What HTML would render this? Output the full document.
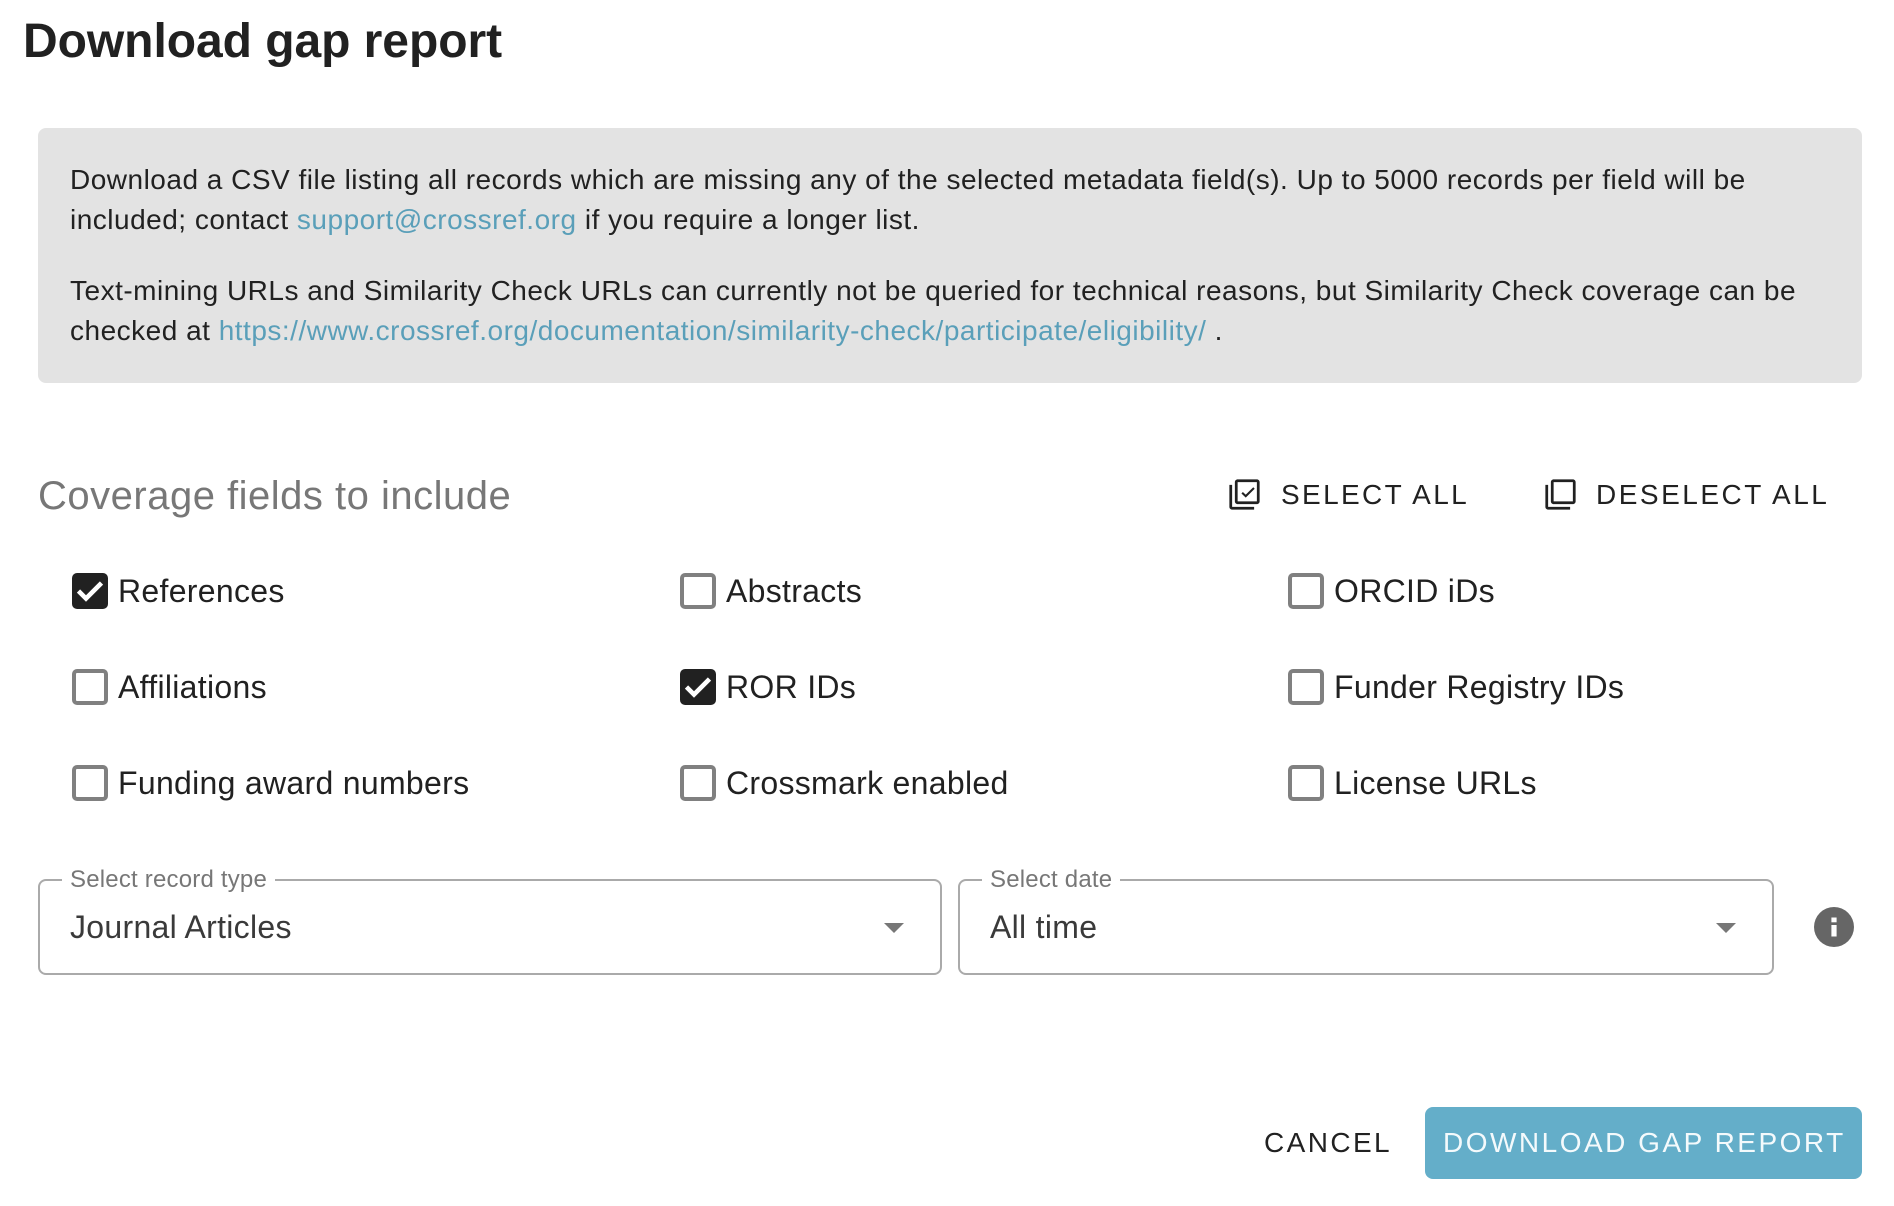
<!DOCTYPE html>
<html><head><meta charset="utf-8"><title>Download gap report</title>
<style>
html,body{margin:0;padding:0;background:#fff}
body{position:relative;width:1894px;height:1206px;overflow:hidden;font-family:"Liberation Sans",Arial,sans-serif;color:#212121}
.t{position:absolute;white-space:nowrap}
.info{font-size:28px;line-height:40px;left:70px;letter-spacing:.5px}
.info a{color:#5a9fb9;text-decoration:none}
.lab{font-size:32px;line-height:36px;letter-spacing:.3px}
.cb{position:absolute;width:36px;height:36px;box-sizing:border-box;border:4px solid #808080;border-radius:5px;background:#fff}
.cb.on{border:0;background:#212121}
.cb svg{position:absolute;left:0;top:0}
.btn{font-size:28px;line-height:32px;letter-spacing:2.4px}
.sel{position:absolute;top:879px;height:96px;box-sizing:border-box;border:2px solid #aaa;border-radius:8px;background:#fff}
.sl{font-size:24px;line-height:28px;color:#777;letter-spacing:.2px;background:#fff;padding:0 8px;top:866px}
.sv{font-size:32px;line-height:36px;color:#3a3a3a;top:909px;letter-spacing:.3px}
.ar{position:absolute;top:923px;width:0;height:0;border-left:10px solid transparent;border-right:10px solid transparent;border-top:10px solid #777}
</style></head><body>
<div class="t" style="left:23px;top:14px;font-size:48px;line-height:56px;font-weight:700;letter-spacing:-.05px">Download gap report</div>
<div style="position:absolute;left:38px;top:128px;width:1824px;height:255px;background:#e3e3e3;border-radius:8px"></div>
<div class="t info" style="top:160px">Download a CSV file listing all records which are missing any of the selected metadata field(s). Up to 5000 records per field will be</div>
<div class="t info" style="top:200px">included; contact <a>support@crossref.org</a> if you require a longer list.</div>
<div class="t info" style="top:271px">Text-mining URLs and Similarity Check URLs can currently not be queried for technical reasons, but Similarity Check coverage can be</div>
<div class="t info" style="top:311px">checked at <a>https://www.crossref.org/documentation/similarity-check/participate/eligibility/</a> .</div>

<div class="t" style="left:38px;top:472px;font-size:40px;line-height:48px;color:#777;letter-spacing:.5px">Coverage fields to include</div>

<svg style="position:absolute;left:1227.6px;top:477.5px" width="33" height="33" viewBox="0 0 24 24" fill="#212121"><path d="M3 5H1v16c0 1.1.9 2 2 2h16v-2H3V5zm18-4H7c-1.1 0-2 .9-2 2v14c0 1.1.9 2 2 2h14c1.1 0 2-.9 2-2V3c0-1.1-.9-2-2-2zm0 16H7V3h14v14z"/><path d="M10.3 10.7l2.6 2.5 6-5.9" fill="none" stroke="#212121" stroke-width="1.5"/></svg>
<div class="t btn" style="left:1281px;top:479px;letter-spacing:2.36px">SELECT ALL</div>
<svg style="position:absolute;left:1543.6px;top:477.5px" width="33" height="33" viewBox="0 0 24 24" fill="#212121"><path d="M3 5H1v16c0 1.1.9 2 2 2h16v-2H3V5zm18-4H7c-1.1 0-2 .9-2 2v14c0 1.1.9 2 2 2h14c1.1 0 2-.9 2-2V3c0-1.1-.9-2-2-2zm0 16H7V3h14v14z"/></svg>
<div class="t btn" style="left:1596px;top:479px;letter-spacing:2.5px">DESELECT ALL</div>

<div class="cb on" style="left:72px;top:573px"><svg width="36" height="36"><polyline points="6.5,18 14,25.5 29.5,10" fill="none" stroke="#fff" stroke-width="4.6"/></svg></div>
<div class="t lab" style="left:118px;top:573px">References</div>
<div class="cb" style="left:680px;top:573px"></div>
<div class="t lab" style="left:726px;top:573px">Abstracts</div>
<div class="cb" style="left:1288px;top:573px"></div>
<div class="t lab" style="left:1334px;top:573px">ORCID iDs</div>

<div class="cb" style="left:72px;top:669px"></div>
<div class="t lab" style="left:118px;top:669px">Affiliations</div>
<div class="cb on" style="left:680px;top:669px"><svg width="36" height="36"><polyline points="6.5,18 14,25.5 29.5,10" fill="none" stroke="#fff" stroke-width="4.6"/></svg></div>
<div class="t lab" style="left:726px;top:669px">ROR IDs</div>
<div class="cb" style="left:1288px;top:669px"></div>
<div class="t lab" style="left:1334px;top:669px">Funder Registry IDs</div>

<div class="cb" style="left:72px;top:765px"></div>
<div class="t lab" style="left:118px;top:765px">Funding award numbers</div>
<div class="cb" style="left:680px;top:765px"></div>
<div class="t lab" style="left:726px;top:765px">Crossmark enabled</div>
<div class="cb" style="left:1288px;top:765px"></div>
<div class="t lab" style="left:1334px;top:765px">License URLs</div>

<div class="sel" style="left:38px;width:904px"></div>
<div class="t sl" style="left:62px">Select record type</div>
<div class="t sv" style="left:70px">Journal Articles</div>
<div class="ar" style="left:884px"></div>
<div class="sel" style="left:958px;width:816px"></div>
<div class="t sl" style="left:982px">Select date</div>
<div class="t sv" style="left:990px">All time</div>
<div class="ar" style="left:1716px"></div>
<svg style="position:absolute;left:1814px;top:907px" width="40" height="40"><circle cx="20" cy="20" r="20" fill="#666"/><rect x="17.4" y="10.5" width="5.2" height="4.8" fill="#fff"/><rect x="17.4" y="18" width="5.2" height="11.5" fill="#fff"/></svg>

<div class="t btn" style="left:1264px;top:1127px">CANCEL</div>
<div style="position:absolute;left:1425px;top:1107px;width:437px;height:72px;background:#64aec9;border-radius:8px"></div>
<div class="t btn" style="left:1443px;top:1127px;color:#f4fafc;letter-spacing:2.5px">DOWNLOAD GAP REPORT</div>
</body></html>
